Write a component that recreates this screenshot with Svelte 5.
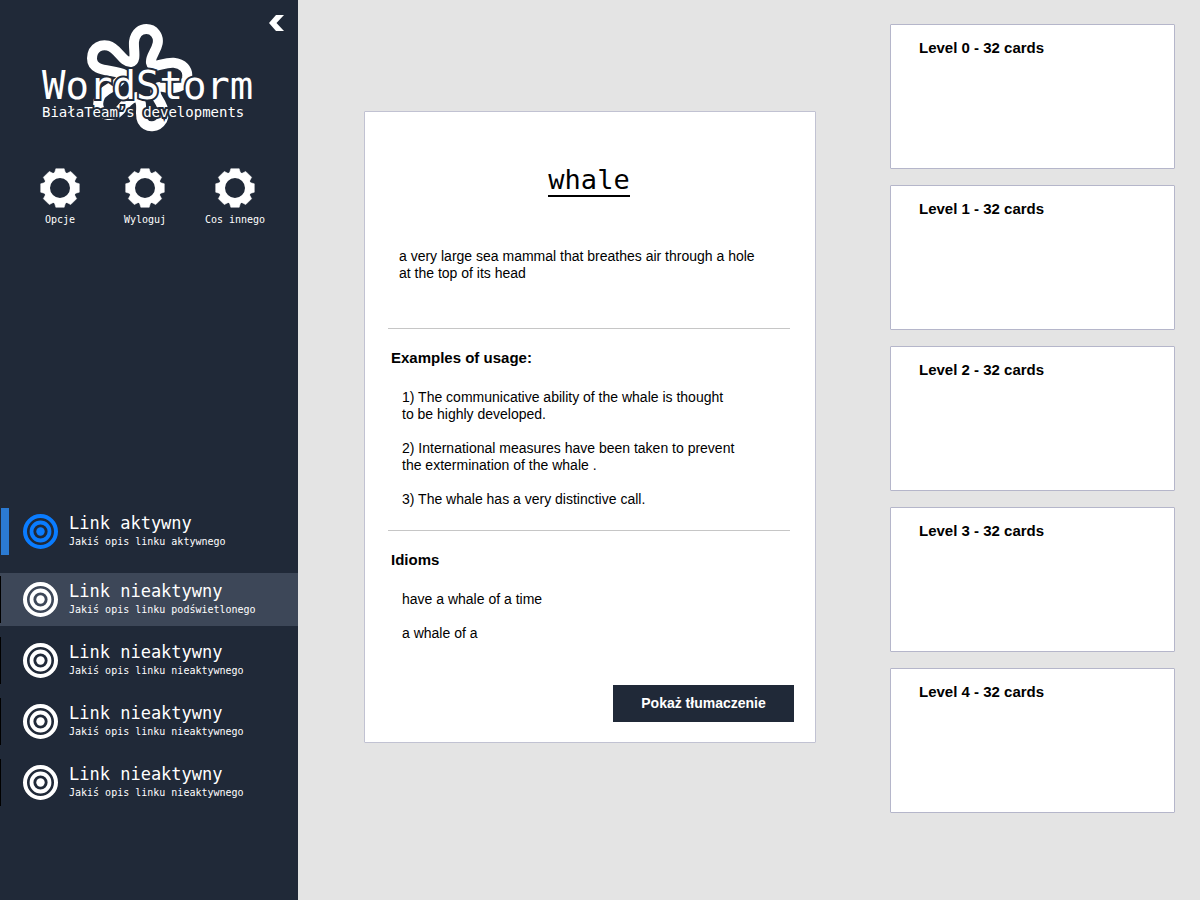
<script>
  const actions = ['Opcje', 'Wyloguj', 'Cos innego'];

  const links = [
    { title: 'Link aktywny', note: 'Jakiś opis linku aktywnego', state: 'active' },
    { title: 'Link nieaktywny', note: 'Jakiś opis linku podświetlonego', state: 'lit' },
    { title: 'Link nieaktywny', note: 'Jakiś opis linku nieaktywnego', state: '' },
    { title: 'Link nieaktywny', note: 'Jakiś opis linku nieaktywnego', state: '' },
    { title: 'Link nieaktywny', note: 'Jakiś opis linku nieaktywnego', state: '' }
  ];

  const examples = [
    '1) The communicative ability of the whale is thought\nto be highly developed.',
    '2) International measures have been taken to prevent\nthe extermination of the whale .',
    '3) The whale has a very distinctive call.'
  ];

  const idioms = ['have a whale of a time', 'a whale of a'];
  const levels = [0, 1, 2, 3, 4];
  const teeth = [0, 45, 90, 135, 180, 225, 270, 315];
</script>

<div class="page">
  <aside>
    <button class="collapse" aria-label="Zwiń menu">
      <svg width="15" height="16" viewBox="0 0 15 16"><path d="M7 0H15L7.500 8L15 16H7L0 8Z" fill="#fff" /></svg>
    </button>

    <div class="logo">
      <svg class="flower" width="106" height="108" viewBox="170 42 318 324" aria-hidden="true">
        <path
          d="M282 194C250 176 185 190 185 145C186 108 217 103 233 107C264 115 276 157 301 156C320 152 309 120 311 95C315 65 335 57 348 57C371 57 386 78 382 100C377 126 359 140 362 158C367 180 395 156 430 158C456 160 475 178 470 204C464 231 430 241 396 230C372 229 371 247 384 268C397 288 406 309 396 329C382 353 350 356 336 332C326 312 338 293 329 271C322 253 306 263 291 276C272 294 264 318 234 315C204 310 197 283 210 258C222 235 263 231 282 194Z"
          fill="none" stroke="#fff" stroke-width="30" stroke-linejoin="round" />
      </svg>
      <div class="brand">
        <h1>WordStorm</h1>
        <p>BiałaTeam’s developments</p>
      </div>
    </div>

    <div class="actions">
      {#each actions as label}
        <button>
          <svg width="40" height="40" viewBox="-20 -20 40 40" aria-hidden="true">
            <circle r="13.200" fill="none" stroke="#fff" stroke-width="6.400" />
            {#each teeth as angle}
              <path d="M-5.500 -15L-4.200 -19.300H4.200L5.500 -15Z" fill="#fff" stroke="#fff" stroke-width=".5" transform="rotate({angle})" />
            {/each}
          </svg>
          <span>{label}</span>
        </button>
      {/each}
    </div>

    <nav>
      {#each links as link}
        <a href="#top" class={link.state}>
          <svg width="35" height="35" viewBox="-17.500 -17.500 35 35" aria-hidden="true">
            <g fill="none" stroke="currentColor">
              <circle r="15.500" stroke-width="4" />
              <circle r="9" stroke-width="3.800" />
            </g>
            <circle r="4.200" fill="currentColor" />
          </svg>
          <span class="text">
            <span class="title">{link.title}</span>
            <span class="note">{link.note}</span>
          </span>
        </a>
      {/each}
    </nav>
  </aside>

  <main>
    <article>
      <h2>whale</h2>
      <p class="definition">a very large sea mammal that breathes air through a hole at the top of its head</p>
      <section>
        <h3>Examples of usage:</h3>
        {#each examples as text}
          <p>{text}</p>
        {/each}
      </section>
      <section>
        <h3>Idioms</h3>
        {#each idioms as text}
          <p>{text}</p>
        {/each}
      </section>
      <button class="translate">Pokaż tłumaczenie</button>
    </article>
  </main>

  <div class="levels">
    {#each levels as level}
      <section><h3>Level {level} - 32 cards</h3></section>
    {/each}
  </div>
</div>

<style>
  :global(body) {
    background: #e4e4e4;
  }

  * {
    box-sizing: border-box;
  }

  h1, h2, h3, p {
    margin: 0;
  }

  button {
    border: 0;
    padding: 0;
    background: none;
    color: inherit;
    font: inherit;
    cursor: pointer;
  }

  svg {
    display: block;
    flex: none;
  }

  .page {
    display: flex;
    min-height: 100vh;
    color: #000;
    font: 14px/17px "Liberation Sans", Arial, sans-serif;
  }

  aside {
    display: flex;
    flex-direction: column;
    flex: none;
    width: 298px;
    padding-bottom: 91px;
    background: #202938;
    color: #fff;
    font-family: "DejaVu Sans Mono", monospace;
  }

  .collapse {
    align-self: flex-end;
    margin: 15px 14px 0 0;
  }

  .logo {
    display: grid;
    margin: -7px 0 0 42px;
  }

  .flower {
    grid-area: 1 / 1;
    margin-left: 45px;
  }

  .brand {
    grid-area: 1 / 1;
    position: relative;
    padding-top: 44px;
    -webkit-text-stroke: 4px #202938;
    paint-order: stroke fill;
    stroke-linejoin: round;
  }

  h1 {
    font-size: 39px;
    font-weight: 400;
    line-height: 36px;
  }

  .brand p {
    font-size: 14px;
    line-height: 16px;
  }

  .actions {
    display: grid;
    grid-template-columns: 80px 90px 90px;
    margin: 36px 0 0 20px;
    font-size: 10px;
    line-height: 12px;
  }

  .actions button {
    display: flex;
    flex-direction: column;
    align-items: center;
    gap: 6px;
  }

  nav {
    display: flex;
    flex-direction: column;
    gap: 8px;
    margin-top: auto;
  }

  nav a {
    display: flex;
    align-items: center;
    gap: 11px;
    height: 53px;
    color: #fff;
    text-decoration: none;
  }

  nav a::before {
    content: "";
    width: 1px;
    height: 47px;
    margin-right: 11px;
    background: #000;
  }

  nav .active {
    margin-bottom: 7px;
  }

  nav .active::before {
    width: 8px;
    margin: 0 3px 0 1px;
    background: #2b7ad2;
  }

  nav .active svg {
    color: #0a7cff;
  }

  nav .lit {
    background: #3d4758;
  }

  .text {
    display: grid;
    padding-bottom: 2px;
  }

  .title {
    font-size: 17px;
    line-height: 22px;
  }

  .note {
    font-size: 10px;
    line-height: 16px;
  }

  main {
    flex: 1;
    padding: 111px 8px 24px 0;
  }

  article {
    display: flex;
    flex-direction: column;
    max-width: 452px;
    min-height: 632px;
    margin: 0 auto;
    padding: 53px 25px 20px 23px;
    border: 1px solid #c1c2d2;
    border-radius: 1px;
    background: #fff;
  }

  h2 {
    align-self: center;
    border-bottom: 2px solid #000;
    font: 400 27px/30px "DejaVu Sans Mono", monospace;
  }

  .definition {
    max-width: 380px;
    margin: 51px 0 46px;
    padding-left: 11px;
  }

  article section {
    padding: 20px 0 22px 14px;
    border-top: 1px solid #c6c6c6;
  }

  h3 {
    font-size: 15px;
    line-height: 17px;
  }

  article h3 {
    margin: 0 0 23px -11px;
  }

  article section p {
    white-space: pre-line;
  }

  article section p + p {
    margin-top: 17px;
  }

  .translate {
    align-self: flex-end;
    width: 181px;
    height: 37px;
    margin: auto -4px 0 0;
    background: #202938;
    color: #fff;
    font-weight: 700;
  }

  .levels {
    display: flex;
    flex-direction: column;
    flex: none;
    gap: 16px;
    width: 310px;
    padding: 24px 25px 24px 0;
  }

  .levels section {
    min-height: 145px;
    padding: 14px 28px;
    border: 1px solid #b5b6ca;
    border-radius: 1px;
    background: #fff;
  }
</style>
